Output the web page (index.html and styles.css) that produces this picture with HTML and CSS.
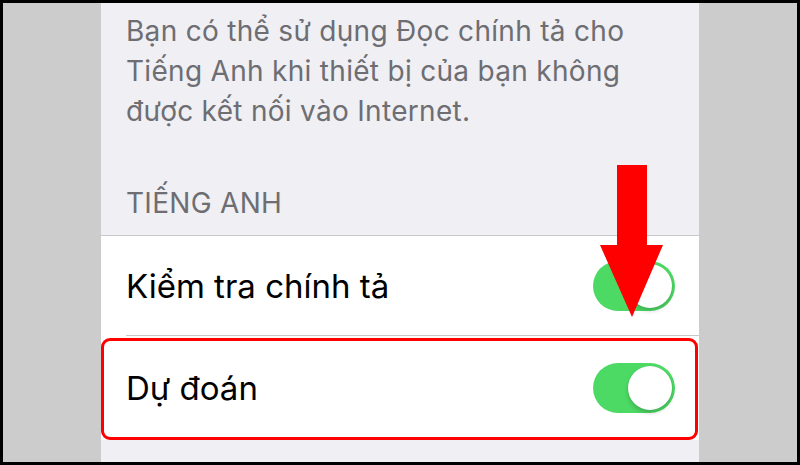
FILE: index.html
```html
<!DOCTYPE html>
<html lang="vi">
<head>
<meta charset="utf-8">
<title>Bàn phím</title>
<link rel="stylesheet" href="styles.css">
</head>
<body>
<div class="frame">
  <div class="side"></div>
  <main class="settings">
    <p class="footnote">Bạn có thể sử dụng Đọc chính tả cho Tiếng Anh khi thiết bị của bạn không được kết nối vào Internet.</p>
    <h2 class="group-title">TIẾNG ANH</h2>
    <ul class="group">
      <li class="row">
        <span class="label">Kiểm tra chính tả</span>
        <span class="switch on"><span class="knob"></span></span>
      </li>
      <li class="row highlighted">
        <span class="label">Dự đoán</span>
        <span class="switch on"><span class="knob"></span></span>
        <span class="callout-box"></span>
      </li>
    </ul>
    <svg class="callout-arrow" width="64" height="153" viewBox="0 0 64 153">
      <polygon points="17,0 47,0 47,80 63,80 32,152 0,80 17,80" fill="#ff0000"/>
    </svg>
  </main>
  <div class="side"></div>
</div>
</body>
</html>
```
FILE: styles.css
```css
html, body {
  margin: 0;
  padding: 0;
  background: #000;
}

.frame {
  width: 800px;
  height: 465px;
  box-sizing: border-box;
  border: 3px solid #000;
  display: flex;
  overflow: hidden;
  font-family: "Inter", "Noto Sans", sans-serif;
}

.side {
  width: 98px;
  background: #cccccc;
  flex: none;
}

.settings {
  position: relative;
  flex: 1;
  background: #efeff4;
  display: flex;
  flex-direction: column;
}

.footnote {
  margin: 0;
  padding: 8px 40px 0 25px;
  font-size: 28px;
  line-height: 40px;
  letter-spacing: 0.3px;
  color: #6d6d72;
}

.group-title {
  margin: 54px 0 14px;
  padding-left: 25px;
  font-size: 28px;
  line-height: 36px;
  font-weight: 400;
  letter-spacing: 0.3px;
  color: #6d6d72;
}

.group {
  list-style: none;
  margin: 0;
  padding: 0;
  background: #fff;
  border-top: 1px solid #c8c7cc;
}

.row {
  position: relative;
  height: 100px;
  display: flex;
  align-items: center;
  justify-content: space-between;
  padding: 0 24px 0 25px;
}

.row + .row {
  height: 104px;
}

.row + .row::before {
  content: "";
  position: absolute;
  top: -1px;
  left: 25px;
  right: 0;
  height: 1px;
  background: #c8c7cc;
}

.label {
  font-size: 33px;
  color: #000;
}

.switch {
  position: relative;
  width: 82px;
  height: 50px;
  border-radius: 25px;
  background: #4cd964;
  flex: none;
}

.knob {
  position: absolute;
  top: 3px;
  right: 3px;
  width: 44px;
  height: 44px;
  border-radius: 50%;
  background: #fff;
  box-shadow: 0 3px 4px rgba(0, 0, 0, 0.18), 0 0 1px rgba(0, 0, 0, 0.12);
}

.callout-box {
  position: absolute;
  top: 2px;
  left: 0;
  right: 1px;
  bottom: 0;
  border: 3px solid #ff0000;
  border-radius: 9px;
  pointer-events: none;
}

.callout-arrow {
  position: absolute;
  left: 499px;
  top: 162px;
}
```
